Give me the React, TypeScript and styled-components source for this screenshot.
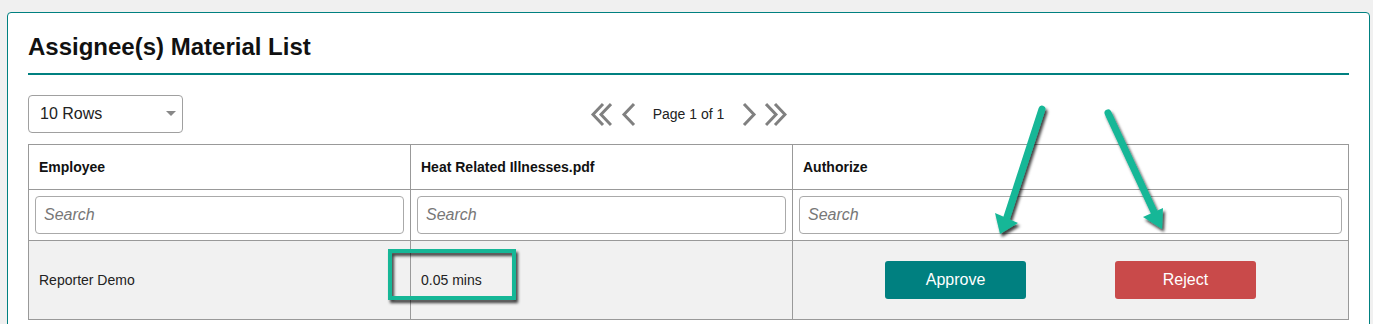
import React from "react";
import styled, { createGlobalStyle } from "styled-components";

const Global = createGlobalStyle`
  html, body { margin: 0; padding: 0; background: #f0f0f0; }
  body { font-family: "Liberation Sans", Arial, sans-serif; color: #222; }
  * { box-sizing: border-box; }
`;

const Page = styled.div`
  position: relative;
  width: 1373px;
  height: 324px;
  overflow: hidden;
  padding: 12px 3px 0 7px;
`;

const Card = styled.section`
  background: #fff;
  border: 1px solid #008080;
  border-radius: 4px;
  padding: 20px 20px 20px 20px;
`;

const Title = styled.h2`
  margin: 0;
  font-size: 24px;
  line-height: 28px;
  font-weight: 700;
  color: #111;
  padding-bottom: 12px;
  border-bottom: 2px solid #008080;
`;

const Toolbar = styled.div`
  display: grid;
  grid-template-columns: 1fr auto 1fr;
  align-items: center;
  margin-top: 20px;
  margin-bottom: 11px;
`;

const SelectBox = styled.div`
  position: relative;
  width: 155px;
  height: 38px;
  border: 1px solid #a0a0a0;
  border-radius: 4px;
  display: flex;
  align-items: center;
  padding-left: 11px;
  font-size: 16px;
  color: #222;
  background: #fff;
`;

const Caret = styled.span`
  position: absolute;
  right: 6px;
  top: 15px;
  width: 0;
  height: 0;
  border-left: 5px solid transparent;
  border-right: 5px solid transparent;
  border-top: 5px solid #888;
`;

const Pager = styled.div`
  display: flex;
  align-items: center;
  height: 38px;
`;

const PagerIcon = styled.svg<{ $ml: number }>`
  margin-left: ${(p) => p.$ml}px;
  display: block;
`;

const PagerText = styled.span<{ $ml: number }>`
  margin-left: ${(p) => p.$ml}px;
  font-size: 14px;
  color: #222;
`;

const Table = styled.table`
  width: 100%;
  table-layout: fixed;
  border-collapse: collapse;
  font-size: 14px;
`;

const Th = styled.th`
  text-align: left;
  font-weight: 700;
  font-size: 14px;
  color: #111;
  line-height: 16px;
  padding: 14px 10px;
  border: 1px solid #999;
  background: #fff;
`;

const SearchCell = styled.td`
  padding: 6px;
  border: 1px solid #999;
  background: #fff;
`;

const SearchInput = styled.input`
  width: 100%;
  height: 38px;
  border: 1px solid #aaa;
  border-radius: 4px;
  padding: 0 8px;
  font-family: "Liberation Sans", Arial, sans-serif;
  font-size: 16px;
  &::placeholder { color: #777; font-style: italic; }
`;

const Td = styled.td`
  padding: 20px 10px;
  border: 1px solid #999;
  background: #f1f1f1;
  color: #222;
  line-height: 38px;
  font-size: 14px;
`;

const Actions = styled.div`
  display: flex;
  justify-content: center;
  gap: 89px;
`;

const Button = styled.button<{ $variant: "approve" | "reject" }>`
  width: 141px;
  height: 38px;
  border: none;
  border-radius: 3px;
  color: #fff;
  font-family: "Liberation Sans", Arial, sans-serif;
  font-size: 16px;
  background: ${(p) => (p.$variant === "approve" ? "#008080" : "#c94a4a")};
`;

const Overlay = styled.svg`
  position: absolute;
  left: 0;
  top: 0;
  pointer-events: none;
`;

const Chevron = ({ dir, double, ml }: { dir: "l" | "r"; double?: boolean; ml: number }) => {
  const w = double ? 22 : 20;
  const one = (x: number) =>
    dir === "l"
      ? `${x + 12},2 ${x + 2},12.5 ${x + 12},23`
      : `${x + 1},2 ${x + 11},12.5 ${x + 1},23`;
  return (
    <PagerIcon $ml={ml} width={w} height={25} viewBox={`0 0 ${w} 25`}>
      {double ? (
        <>
          <polyline points={one(dir === "l" ? 1 : 0)} fill="none" stroke="#808080" strokeWidth={3} />
          <polyline points={one(9)} fill="none" stroke="#808080" strokeWidth={3} />
        </>
      ) : (
        <polyline points={one(2)} fill="none" stroke="#808080" strokeWidth={3} />
      )}
    </PagerIcon>
  );
};

export default function App() {
  const green = "#15b797";
  return (
    <Page>
      <Global />
      <Card>
        <Title>Assignee(s) Material List</Title>
        <Toolbar>
          <SelectBox>
            10 Rows
            <Caret />
          </SelectBox>
          <Pager>
            <Chevron dir="l" double ml={0} />
            <Chevron dir="l" ml={8} />
            <PagerText $ml={13}>Page 1 of 1</PagerText>
            <Chevron dir="r" ml={17} />
            <Chevron dir="r" double ml={4} />
          </Pager>
          <div />
        </Toolbar>
        <Table>
          <colgroup>
            <col style={{ width: 382 }} />
            <col style={{ width: 382 }} />
            <col />
          </colgroup>
          <thead>
            <tr>
              <Th>Employee</Th>
              <Th>Heat Related Illnesses.pdf</Th>
              <Th>Authorize</Th>
            </tr>
            <tr>
              <SearchCell><SearchInput placeholder="Search" /></SearchCell>
              <SearchCell><SearchInput placeholder="Search" /></SearchCell>
              <SearchCell><SearchInput placeholder="Search" /></SearchCell>
            </tr>
          </thead>
          <tbody>
            <tr>
              <Td>Reporter Demo</Td>
              <Td>0.05 mins</Td>
              <Td>
                <Actions>
                  <Button $variant="approve">Approve</Button>
                  <Button $variant="reject">Reject</Button>
                </Actions>
              </Td>
            </tr>
          </tbody>
        </Table>
      </Card>
      <Overlay width={1373} height={324} viewBox="0 0 1373 324">
        <defs>
          <filter id="sh" x="-20%" y="-20%" width="140%" height="140%">
            <feDropShadow dx="2" dy="3" stdDeviation="1.5" floodColor="#000" floodOpacity="0.75" />
          </filter>
        </defs>
        <g filter="url(#sh)">
          <rect x={390} y={251} width={124} height={47} fill="none" stroke={green} strokeWidth={4} />
          <line x1={1042} y1={109} x2={1006} y2={220} stroke={green} strokeWidth={7} strokeLinecap="round" />
          <polygon points="995,213 1018,223 1000,234" fill={green} />
          <line x1={1108} y1={113} x2={1155} y2={214} stroke={green} strokeWidth={7} strokeLinecap="round" />
          <polygon points="1143,217 1163,208 1162,229" fill={green} />
        </g>
      </Overlay>
    </Page>
  );
}
